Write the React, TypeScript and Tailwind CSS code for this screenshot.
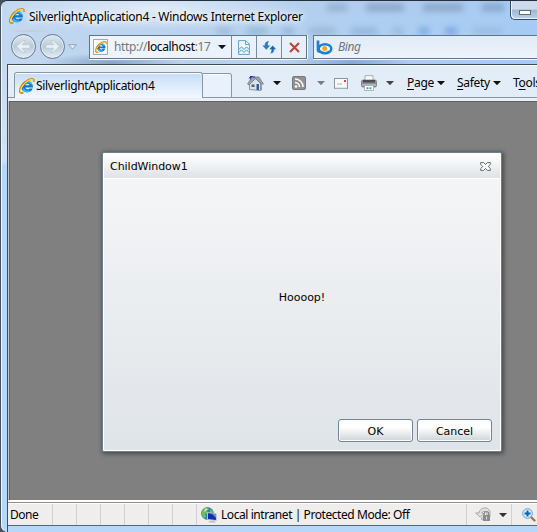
import React from "react";

const ui = "font-['Noto_Sans','Open_Sans',sans-serif]";

function IeLogo({ size = 16 }: { size?: number }) {
  return (
    <svg width={size} height={size} viewBox="0 0 16 16" fill="none" className="shrink-0">
      <path d="M14 9.600H6.300c.3 2.200 3.300 2.200 4 .8h3.300C12 16 2.500 15.500 2.400 8.700 2.500 1 14.200 .8 14 9.600Z M6.300 7.200h4.100C10.100 5.300 6.700 5.300 6.300 7.200Z" fill="#0f78cf" fillRule="evenodd" />
      <path d="M3.700 8C4.300 3 11 2.200 12.700 6.500M4.300 10.500c1 3 4 3.500 6 2.500" stroke="#3fbdf3" strokeWidth="1.600" />
      <path d="M4.500 14.500C-1.200 17 .3 9 6 4.200c4.200-3.500 9.800-4.900 8.700-.5" stroke="#d9890f" strokeWidth="1.900" />
      <path d="M2.500 14.200C-.2 13.500 3 7.800 7 4.200c3.200-2.700 6.800-3.500 7.300-1.800" stroke="#ffda55" strokeWidth="1.100" />
    </svg>
  );
}

function Caret({ color = "#111" }: { color?: string }) {
  return (
    <svg width="8" height="4" viewBox="0 0 8 4" className="shrink-0">
      <path d="M0 0h8L4 4.200Z" fill={color} />
    </svg>
  );
}

function NavButton({ flip = false }: { flip?: boolean }) {
  return (
    <div className="flex size-[25px] shrink-0 items-center justify-center rounded-full border border-[#65788b] bg-linear-to-b from-[#dfe8f0] via-[#bccbd8] to-[#e2eef7] shadow-[inset_0_0_0_1px_#e3edf6]">
      <svg width="17" height="15" viewBox="0 0 17 15" className={flip ? "shrink-0 -scale-x-100" : "shrink-0"}>
        <path d="M1.500 7.500 8 1.500h2.500L7.300 5.700H15v3.600H7.300l3.200 4.200H8Z" fill="#e9f0f5" stroke="#b9c8d5" strokeWidth=".8" />
      </svg>
    </div>
  );
}

function BrokenPage() {
  return (
    <svg width="12" height="15" viewBox="0 0 12 15">
      <path d="M.6.6h7.200L11.400 4.200v10.200H.6Z" fill="#f1f9fd" stroke="#4b9cc9" strokeWidth=".9" />
      <path d="M7.500 1v3.500H11" fill="none" stroke="#4b9cc9" strokeWidth=".9" />
      <path d="m1 9.500 2.500-2.700L6 9.500l2.500-2.700L11 9.500M1 12.500l2.500-2.700L6 12.500l2.500-2.700 2.500 2.700" fill="none" stroke="#4b9cc9" strokeWidth="1" />
    </svg>
  );
}

function Refresh() {
  return (
    <svg width="15" height="13" viewBox="0 0 15 13">
      <path d="M7 .3C3.800.3 2.800 2 2.700 4.500H.3l4 4.300 4-4.300H5.800C5.800 2.600 6 1.500 7 .3Z" fill="#2b7dc4" />
      <path d="M8 12.700c3.200 0 4.200-1.700 4.300-4.200h2.400l-4-4.300-4 4.300h2.500c0 1.900-.2 3-1.200 4.200Z" fill="#2368ab" stroke="#e6f2fb" strokeWidth=".6" />
    </svg>
  );
}

function House() {
  return (
    <svg width="17" height="17" viewBox="0 0 17 17">
      <path d="M3 1h3v5H3z" fill="#3030b5" />
      <path d="M2.500 8.500 8 3l5.500 5.500v7l-11-1Z" fill="#dce2ea" stroke="#68717c" strokeWidth=".7" />
      <path d="M5 2h7l4.500 7-2 .5L9 3.200 2 10 .5 9Z" fill="#9aa5b2" stroke="#5d6875" strokeWidth=".6" />
      <path d="M9.500 9H12v6H9.500z" fill="#2b609b" />
      <path d="M4.500 9.500h3v2.500h-3z" fill="#56616d" />
      <path d="M2 3.500 3.500 1.500M6 2h2" stroke="#2d2ed2" />
      <path d="M13 10.500 15 10v5l-1.500.7Z" fill="#8e98a3" />
    </svg>
  );
}

function Rss() {
  return (
    <svg width="14" height="14" viewBox="0 0 14 14">
      <rect x=".5" y=".5" width="13" height="13" rx="1.500" fill="#929292" stroke="#777" />
      <circle cx="4" cy="10.500" r="1.300" fill="#fff" />
      <path d="M3 6.500a4.500 4.500 0 0 1 4.500 4.500M3 3a8 8 0 0 1 8 8" stroke="#fff" strokeWidth="1.500" fill="none" />
    </svg>
  );
}

function Mail() {
  return (
    <svg width="14" height="11" viewBox="0 0 14 11">
      <rect x=".5" y=".5" width="13" height="10" fill="#fafafa" stroke="#8d949b" />
      <path d="M10 2h2v2h-2z" fill="#d94b3d" />
      <path d="M3 6h5" stroke="#a7adb5" />
      <path d="M1 10h12" stroke="#c8ccd0" />
    </svg>
  );
}

function Printer() {
  return (
    <svg width="16" height="16" viewBox="0 0 16 16">
      <path d="M4 5V.7h8V5" fill="#fafafa" stroke="#999" strokeWidth=".8" />
      <rect x=".5" y="5" width="15" height="7" rx="1.500" fill="#8c9195" stroke="#6c7175" strokeWidth=".7" />
      <path d="M2 5h12v2.500H2z" fill="#4a4e52" />
      <path d="M1 10h14" stroke="#d4d7da" />
      <path d="M3.500 10.500h9v5h-9z" fill="#fff" stroke="#939a9f" strokeWidth=".7" />
      <path d="M5.500 12.200h2v2h-2z" fill="#34a0d3" />
      <path d="M8.500 12.200h2v2h-2z" fill="#4dab78" />
    </svg>
  );
}

function Bing() {
  return (
    <svg width="17" height="15" viewBox="0 0 17 15" fill="none">
      <path d="M2 .5V10c0 1 .7 1.500 2 1.500" stroke="#1f7fd2" strokeWidth="2.700" />
      <ellipse cx="9" cy="8.700" rx="6.300" ry="4.500" fill="#f3f8fd" stroke="#1f7fd2" strokeWidth="2.500" />
      <circle cx="8.700" cy="8.600" r="2.500" fill="#f6a619" />
    </svg>
  );
}

function Globe() {
  return (
    <svg width="17" height="16" viewBox="0 0 17 16" className="shrink-0">
      <circle cx="6.500" cy="6.500" r="6" fill="#2b84c9" stroke="#377b8d" strokeWidth=".7" />
      <path d="M2 3c2-3 5-2.500 6-1L6 4l1 2-3 1 1 3-2 1C0 8 .5 5 2 3ZM9 2l3 2v3L9 6Z" fill="#6dbe55" />
      <path d="M4 2c2-1 3 0 2 1L3 5Z" fill="#d0f2b5" />
      <path d="M6.500 5.500 15.500 7v6.500l-9-1Z" fill="#152fab" stroke="#c9d2dc" strokeWidth=".9" />
      <path d="m10 6 5 1v4Z" fill="#6b8de9" />
      <path d="m8 14 5-.2 2 1.700H8Z" fill="#b9c0c7" />
    </svg>
  );
}

function ProtectedFilter() {
  return (
    <svg width="17" height="15" viewBox="0 0 17 15" className="shrink-0">
      <path d="M4 6c1-6 9-7 11-1.500V9c-1.500 4-6 5-9 3l1.500-2c2 1 4 .5 4.500-1.500C12.500 4 8 3 6.800 6L9 6.500 5 10 .7 6Z" fill="#e2e2e2" stroke="#989898" strokeWidth=".8" />
      <path d="M9.200 8V6.700a2.200 2.200 0 0 1 4.400 0V8" fill="none" stroke="#868686" strokeWidth="1.200" />
      <rect x="8" y="8" width="7" height="6" fill="#8b8b8b" />
      <path d="M11.500 9.500v3" stroke="#ddd" />
    </svg>
  );
}

function Magnifier() {
  return (
    <svg width="14" height="14" viewBox="0 0 14 14" className="shrink-0">
      <path d="m8.500 8.500 4 4" stroke="#b16c37" strokeWidth="2.200" strokeLinecap="round" />
      <circle cx="5.500" cy="5.500" r="4.800" fill="#d6effd" stroke="#6b9dcc" />
      <path d="M5.500 2.500v6M2.500 5.500h6" stroke="#1260b5" strokeWidth="2" />
    </svg>
  );
}

function MenuLabel({ first, rest, before = "" }: { first: string; rest: string; before?: string }) {
  return (
    <span>
      {before}
      <span className="underline underline-offset-2">{first}</span>
      {rest}
    </span>
  );
}

function TitleBar() {
  return (
    <div className="relative flex h-[33px] shrink-0 items-start pl-[7px]">
      {/* Shapes of the window behind, seen through the glass frame */}
      <div className="absolute top-[3px] left-[325px] flex gap-[19px] opacity-45 blur-[3px]">
        <span className="h-[7px] w-[20px] bg-[#7189a8]" />
        <span className="h-[7px] w-[38px] bg-[#5b7191]" />
        <span className="h-[7px] w-[40px] bg-[#5b7191]" />
        <span className="h-[7px] w-[22px] bg-[#5b7191]" />
      </div>
      <div className="absolute top-[27px] left-[215px] flex gap-[16px] opacity-45 blur-[3px]">
        <span className="h-[6px] w-[14px] bg-[#7a94b4]" />
        <span className="h-[6px] w-[20px] bg-[#5f9aa9]" />
        <span className="h-[6px] w-[10px] bg-[#5f87b9]" />
        <span className="h-[6px] w-[26px] bg-[#7a94b4]" />
        <span className="h-[6px] w-[26px] bg-[#6b8fbc]" />
        <span className="h-[6px] w-[10px] bg-[#7a94b4]" />
        <span className="h-[6px] w-[10px] bg-[#2d6cc4]" />
        <span className="h-[6px] w-[12px] bg-[#2d6cc4]" />
        <span className="h-[6px] w-[30px] bg-[#8aa5c6]" />
      </div>
      <div className="relative mt-[7px] flex">
        <IeLogo />
        <span className="ml-[4px] text-[12px] leading-[17px] tracking-[-0.260px] whitespace-nowrap [text-shadow:0_0_5px_#fff,0_0_8px_#fff,0_0_14px_#fff]">
          SilverlightApplication4 - Windows Internet Explorer
        </span>
      </div>
      <div className="absolute top-0 right-0 flex h-[19px] w-[27px] items-center justify-center rounded-bl-[5px] border-b border-l border-[#364b62] bg-linear-to-b from-[#cddcec] from-45% via-[#9fb7d1] via-50% to-[#bbd5ef] shadow-[inset_1px_-1px_0_#edf5fc]">
        <span className="mt-[5px] ml-[2px] h-[5px] w-[12px] border border-[#5c6d7e] bg-white" />
      </div>
    </div>
  );
}

function AddressRow() {
  const cell = "flex h-full w-[25px] shrink-0 items-center justify-center border-l border-[#768b9f]";
  return (
    <div className="relative flex h-[31px] shrink-0 pl-[8px]">
      <div className="flex h-[25px] w-[79px] shrink-0 items-center gap-[4px] pl-[1px]">
        <NavButton />
        <NavButton flip />
        <svg width="9" height="6" viewBox="0 0 9 6" className="-ml-px">
          <path d="M.7.7h7.600L4.500 5.200Z" fill="#e4edf5" stroke="#8496a8" strokeWidth=".8" />
        </svg>
      </div>
      <div className="mt-px flex h-[24px] w-[218px] shrink-0 items-center border border-[#627587] bg-linear-to-r from-[#f0f5fb] to-[#e6f0fb] shadow-[0_1px_0_#f4f9fd,1px_0_0_#f4f9fd]">
        <div className="flex w-[128px] shrink-0 items-center pl-[3px]">
          <span className="flex h-[16px] w-[15px] shrink-0 items-center justify-center border border-[#a2aab1] bg-[#fcfcfa]">
            <IeLogo size={12} />
          </span>
          <span className="ml-[6px] text-[12px] leading-[16px] tracking-[-0.350px] whitespace-nowrap text-[#777]">
            http://<span className="text-black">localhost</span>:17
          </span>
        </div>
        <div className="flex w-[13px] shrink-0">
          <Caret />
        </div>
        <div className={cell}><BrokenPage /></div>
        <div className={cell}><Refresh /></div>
        <div className={cell}>
          <svg width="11" height="11" viewBox="0 0 11 11">
            <path d="M1 1c3 3 6 6 9 9M10 1 1 10" stroke="#bd443b" strokeWidth="2.100" fill="none" />
          </svg>
        </div>
      </div>
      <div className="mt-px ml-[6px] flex h-[24px] flex-1 items-center border-y border-l border-[#627587] bg-linear-to-b from-[#e1ecf8] to-[#edf3fa] pl-[2px] shadow-[0_1px_0_#f4f9fd]">
        <Bing />
        <span className="ml-[5px] text-[12px] tracking-[-0.450px] text-[#6f767d] italic">Bing</span>
      </div>
    </div>
  );
}

function CommandBar() {
  return (
    <div className="flex h-[36px] shrink-0 flex-col bg-[#e3edf8]">
      <div className="h-px shrink-0 bg-white" />
      <div className="flex h-[32px] shrink-0">
        <div className="w-[6px] shrink-0 border-b border-[#8694a4]" />
        <div className="mt-[6px] flex h-[26px] w-[189px] shrink-0 items-center rounded-t-[3px] border-x border-t border-[#8996a5] bg-linear-to-b from-[#c5ddf8] to-[#f2f8fe] pl-[4px] shadow-[inset_0_1px_0_#fff]">
          <IeLogo />
          <span className="ml-px text-[12px] leading-[17px] tracking-[-0.330px]">SilverlightApplication4</span>
        </div>
        <div className="mt-[7px] h-[25px] w-[29px] shrink-0 rounded-tr-[3px] border-t border-r border-b border-[#8996a5] bg-[#e8f1fc] shadow-[inset_0_1px_0_#fff]" />
        <div className="flex min-w-0 flex-1 items-center overflow-hidden border-b border-[#8694a4] pt-[3px] pl-[15px] text-[12px] tracking-[-0.300px] whitespace-nowrap">
          <div className="flex w-[45px] shrink-0 items-center gap-[9px]"><House /><Caret /></div>
          <div className="flex w-[42px] shrink-0 items-center gap-[11px]"><Rss /><Caret color="#777e86" /></div>
          <div className="flex w-[27px] shrink-0"><Mail /></div>
          <div className="flex w-[46px] shrink-0 items-center gap-[9px]"><Printer /><Caret color="#444" /></div>
          <div className="flex w-[50px] shrink-0 items-center gap-[3px]"><MenuLabel first="P" rest="age" /><Caret /></div>
          <div className="flex w-[56px] shrink-0 items-center gap-[3px]"><MenuLabel first="S" rest="afety" /><Caret /></div>
          <MenuLabel before="T" first="o" rest="ols" />
        </div>
      </div>
      <div className="h-[3px] shrink-0 bg-[#edf1f6]" />
    </div>
  );
}

function DialogButton({ label }: { label: string }) {
  return (
    <button className="flex h-[23px] w-[75px] items-center justify-center rounded-[3px] border border-[#718596] bg-linear-to-b from-white from-35% to-[#cfd4d8] pt-[3px] shadow-[inset_0_0_0_1px_#fbfcfd]">
      {label}
    </button>
  );
}

function ChildWindow() {
  return (
    <div className="flex h-[300px] w-[400px] flex-col rounded-[2px] border border-[#6b7f90] bg-white p-px font-['DejaVu_Sans',sans-serif] text-[11px] tracking-[-0.030px] text-black shadow-[1px_1px_4px_1px_#4a4a4a]">
      <div className="flex h-[24px] shrink-0 items-center justify-between bg-linear-to-b from-white to-[#dfe3e6] pr-[9px] pl-[6px]">
        <span className="pt-[3px]">ChildWindow1</span>
        <svg width="11" height="9" viewBox="0 0 11 9" className="mt-px">
          <path d="M.7.6h2.900l1.900 2 1.900-2h2.900v1.800L8.200 4.500l2.100 2v1.900H7.400l-1.900-2-1.900 2H.7V6.500l2.100-2L.7 2.400Z" fill="#fff" stroke="#65696d" strokeWidth="1" />
        </svg>
      </div>
      <div className="mt-px flex flex-1 flex-col bg-linear-to-b from-[#f4f5f7] to-[#dfe4e8]">
        <div className="flex h-[240px] shrink-0 items-center justify-center pb-[2px]">Hoooop!</div>
        <div className="flex justify-end gap-[4px] pr-[8px]">
          <DialogButton label="OK" />
          <DialogButton label="Cancel" />
        </div>
      </div>
    </div>
  );
}

function StatusBar() {
  return (
    <div className="flex h-[26px] shrink-0 flex-col border-b border-[#566675] bg-[#f0eded] text-[12px]">
      <div className="h-[2px] shrink-0 bg-white" />
      <div className="h-px shrink-0 bg-[#8d8d8d]" />
      <div className="h-px shrink-0 bg-white" />
      <div className="flex h-[21px] shrink-0 items-center whitespace-nowrap">
        <span className="w-[44px] shrink-0 pl-[2px] tracking-[-0.500px]">Done</span>
        {[0, 1, 2, 3, 4, 5].map((i) => (
          <span key={i} className="h-full w-[24px] shrink-0 border-l border-[#d0d1d5]" />
        ))}
        <div className="flex h-full w-[270px] shrink-0 items-center border-l border-[#d0d1d5] pl-[4px]">
          <Globe />
          <span className="ml-[3px] tracking-[-0.430px]">Local intranet | Protected Mode: Off</span>
        </div>
        <div className="flex h-full w-[45px] shrink-0 items-center gap-[7px] border-l border-[#d0d1d5] pl-[8px]"><ProtectedFilter /><Caret color="#333" /></div>
        <div className="flex h-full min-w-0 flex-1 items-center border-l border-[#d0d1d5] pl-[10px]"><Magnifier /></div>
      </div>
    </div>
  );
}

export default function App() {
  return (
    <div className={`flex h-[532px] w-[537px] overflow-hidden bg-[#46535f] text-black ${ui}`}>
      <div className="ml-px flex w-[536px] shrink-0 flex-col overflow-hidden rounded-tl-[7px] rounded-bl-[7px] border-t border-[#25303c] bg-linear-to-b from-[#c6d9ed] from-10% via-[#d3e2f8] via-30% to-[#b5d8fa] to-31% pl-px shadow-[inset_1px_0_0_#eff6fd]">
        <div className="flex h-[63px] shrink-0 flex-col bg-[radial-gradient(ellipse_at_28px_30px,#c5bca988_0,transparent_22px),radial-gradient(ellipse_at_150px_8px,#dfebf8_0,transparent_150px),radial-gradient(ellipse_at_110px_62px,#86a4c8_0,transparent_70px),radial-gradient(ellipse_at_350px_62px,#86a8d0_0,transparent_60px),linear-gradient(90deg,#c3d8f0,#b2cfef_60%,#a5cbf4)]">
          <TitleBar />
          <AddressRow />
        </div>
        <div className="ml-[5px] flex flex-1 flex-col border-t border-l border-[#3b4d62]">
          <CommandBar />
          <div className="flex h-[399px] shrink-0 bg-[#c4c8cd] pl-px">
            <main className="flex flex-1 border-t border-l border-[#626262] bg-[#808080] pt-[50px] pl-[92px]">
              <ChildWindow />
            </main>
          </div>
          <StatusBar />
        </div>
      </div>
    </div>
  );
}
